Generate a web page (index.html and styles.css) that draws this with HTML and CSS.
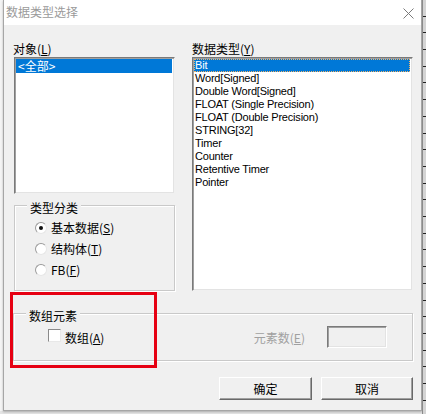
FILE: index.html
```html
<!DOCTYPE html>
<html lang="zh">
<head>
<meta charset="utf-8">
<title>数据类型选择</title>
<link rel="stylesheet" href="styles.css">
</head>
<body>
<div class="desk">
  <div class="strip-left"></div>
  <div class="window">
    <div class="titlebar">
      <span class="title">数据类型选择</span>
      <svg class="close" width="11" height="11" viewBox="0 0 11 11"><path d="M0.5 0.5 L10.5 10.5 M10.5 0.5 L0.5 10.5" stroke="#7a7a7a" stroke-width="1" fill="none"/></svg>
    </div>
    <div class="panel">
      <div class="top">
        <div class="col-left">
          <div class="label">对象(<u>L</u>)</div>
          <div class="list list-obj">
            <div class="item sel cjk">&lt;全部&gt;</div>
          </div>
          <div class="group group-kind">
            <div class="group-title">类型分类</div>
            <div class="radio-row"><span class="radio checked"></span><span>基本数据(<u>S</u>)</span></div>
            <div class="radio-row"><span class="radio"></span><span>结构体(<u>T</u>)</span></div>
            <div class="radio-row"><span class="radio"></span><span>FB(<u>F</u>)</span></div>
          </div>
        </div>
        <div class="col-right">
          <div class="label">数据类型(<u>Y</u>)</div>
          <div class="list list-type">
            <div class="item sel focus">Bit</div>
            <div class="item">Word[Signed]</div>
            <div class="item">Double Word[Signed]</div>
            <div class="item">FLOAT (Single Precision)</div>
            <div class="item">FLOAT (Double Precision)</div>
            <div class="item">STRING[32]</div>
            <div class="item">Timer</div>
            <div class="item">Counter</div>
            <div class="item">Retentive Timer</div>
            <div class="item">Pointer</div>
          </div>
        </div>
      </div>
      <div class="group group-array">
        <div class="group-title">数组元素</div>
        <div class="array-row">
          <span class="checkbox"></span>
          <span class="check-label">数组(<u>A</u>)</span>
          <span class="count-label">元素数(<u>E</u>)</span>
          <span class="count-box"></span>
        </div>
      </div>
      <div class="buttons">
        <button class="btn">确定</button>
        <button class="btn">取消</button>
      </div>
      <div class="highlight"></div>
    </div>
  </div>
  <div class="strip-right"></div>
</div>
</body>
</html>
```
FILE: styles.css
```css
* { box-sizing: border-box; }
html, body { margin: 0; padding: 0; }
body {
  width: 426px;
  height: 414px;
  overflow: hidden;
  background: #e4e4e4;
  font-family: "Noto Sans CJK SC", "Liberation Sans", sans-serif;
  font-size: 12px;
  color: #000;
}
u { text-decoration: underline; text-underline-offset: 1px; }

.desk {
  display: flex;
  height: 414px;
}
.strip-left {
  width: 3px;
  height: 411px;
  background: repeating-linear-gradient(to bottom, #f4f4f4 0 26px, #222 26px 27px) 0 -2px / 3px 24.3px repeat-y, #f4f4f4;
}
.strip-right {
  width: 4px;
  height: 414px;
  border-left: 1px solid #8a8a8a;
  background: repeating-linear-gradient(to bottom, #d4d4d4 0 15.7px, #222 15.7px 16.7px);
}

.window {
  width: 419px;
  height: 411px;
  border-left: 1px solid #a6a6a6;
  border-right: 1px solid #a6a6a6;
  border-bottom: 1px solid #a6a6a6;
  display: flex;
  flex-direction: column;
  box-shadow: 0 1px 2px rgba(0,0,0,0.25);
}

.titlebar {
  height: 25px;
  background: #fff;
  display: flex;
  align-items: center;
  justify-content: space-between;
  padding-left: 2px;
  padding-right: 7px;
}
.title {
  color: #9a9a9a;
  font-size: 12px;
  line-height: 14px;
  margin-top: -1px;
}
.close { display: block; margin-top: 1px; }

.panel {
  position: relative;
  flex: 1;
  background: #f0f0f0;
  padding: 17px 8px 0 9px;
}

.top {
  display: flex;
  gap: 17px;
}
.col-left { width: 162px; }
.col-right { width: 221px; }

.label {
  height: 14px;
  line-height: 14px;
  margin-bottom: 1px;
  white-space: nowrap;
}

.list {
  background: #fff;
  border-style: solid;
  border-width: 1px;
  border-color: #7a7a7a #f0f0f0 #f0f0f0 #7a7a7a;
  box-shadow: inset 1px 1px 0 #a0a0a0, inset -1px -1px 0 #e3e3e3;
  padding: 1px 2px 0 1px;
  overflow: hidden;
}
.list-obj {
  margin-left: 1px;
  width: 161px;
  height: 137px;
}
.list-type {
  width: 221px;
  height: 234px;
}
.item {
  height: 13px;
  line-height: 13px;
  padding-left: 1px;
  font-family: "Liberation Sans", "DejaVu Sans", sans-serif;
  font-size: 11px;
  letter-spacing: -0.2px;
  white-space: nowrap;
}
.item.cjk {
  height: 14px;
  line-height: 14px;
  font-family: "Noto Sans CJK SC", sans-serif;
  font-size: 12px;
  letter-spacing: 0;
  padding-left: 2px;
}
.sel {
  background: #0078d7;
  color: #fff;
}
.focus {
  outline: 1px dotted #f2b468;
  outline-offset: -1px;
}

.group {
  border: 1px solid #c9c9c9;
  box-shadow: 1px 1px 0 #fff, inset 1px 1px 0 #fff;
}
.group-title {
  display: block;
  width: max-content;
  background: #f0f0f0;
  line-height: 14px;
  height: 14px;
  padding: 0 3px;
  margin-top: -5px;
  margin-left: 12px;
}
.group-kind {
  margin-top: 11px;
  margin-left: 1px;
  width: 161px;
  height: 86px;
}
.radio-row {
  display: flex;
  align-items: center;
  height: 21px;
  padding-left: 20px;
}
.group-kind .group-title + .radio-row { margin-top: 2px; }
.radio {
  width: 12px;
  height: 12px;
  border-radius: 50%;
  background: #fff;
  border: 1px solid;
  border-color: #9a9a9a #e6e6e6 #e6e6e6 #9a9a9a;
  margin-right: 4px;
  display: flex;
  align-items: center;
  justify-content: center;
}
.radio.checked::after {
  content: "";
  width: 4px;
  height: 4px;
  border-radius: 50%;
  background: #111;
}

.group-array {
  margin-top: 22px;
  width: 400px;
  height: 48px;
}
.array-row {
  display: flex;
  align-items: center;
  height: 22px;
  margin-top: 3px;
  padding-left: 34px;
  padding-right: 25px;
}
.checkbox {
  width: 13px;
  height: 13px;
  background: #fff;
  border: 1px solid;
  border-color: #8a8a8a #e8e8e8 #e8e8e8 #8a8a8a;
  margin-right: 4px;
  margin-bottom: 3px;
}
.count-label {
  margin-left: auto;
  color: #a0a0a0;
  margin-right: 22px;
}
.count-box {
  width: 60px;
  height: 22px;
  background: #f0f0f0;
  border: 1px solid;
  border-color: #7a7a7a #fff #fff #7a7a7a;
  box-shadow: inset 1px 1px 0 #a0a0a0, inset -1px -1px 0 #e3e3e3;
}

.buttons {
  display: flex;
  justify-content: flex-end;
  gap: 9px;
  margin-top: 16px;
}
.btn {
  width: 93px;
  height: 23px;
  padding: 0;
  background: #f0f0f0;
  font-family: "Noto Sans CJK SC", sans-serif;
  font-size: 12px;
  line-height: 14px;
  color: #000;
  border: 1px solid;
  border-color: #fff #696969 #696969 #fff;
  box-shadow: inset -1px -1px 0 #a0a0a0;
  border-radius: 0;
}
.btn + .btn { width: 92px; }

.highlight {
  position: absolute;
  left: 6px;
  top: 267px;
  width: 147px;
  height: 76px;
  border: 3px solid #e60012;
  pointer-events: none;
}
```
